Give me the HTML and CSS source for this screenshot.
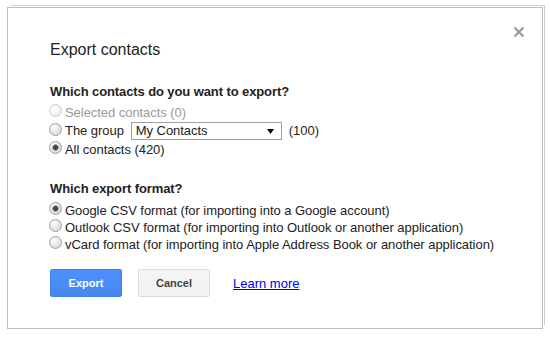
FILE: index.html
```html
<!DOCTYPE html>
<html lang="en">
<head>
<meta charset="utf-8">
<title>Export contacts</title>
<link rel="stylesheet" href="styles.css">
</head>
<body>
<div class="dialog">
  <span class="close" aria-label="Close">
    <svg width="12" height="12" viewBox="0 0 12 12"><path d="M1.5 1.5L10.5 10.5M10.5 1.5L1.5 10.5" stroke="#9a9a9a" stroke-width="2.2" fill="none"/></svg>
  </span>
  <h1 class="title">Export contacts</h1>

  <div class="heading">Which contacts do you want to export?</div>
  <div class="opts">
    <div class="opt disabled"><span class="radio off"></span>Selected contacts (0)</div>
    <div class="opt tall"><span class="radio"></span>The group
      <span class="select"><span>My Contacts</span><svg width="7" height="5" viewBox="0 0 7 5"><path d="M0 0H7L3.5 5Z" fill="#000"/></svg></span>
      (100)</div>
    <div class="opt"><span class="radio on"></span>All contacts (420)</div>
  </div>

  <div class="heading fmt">Which export format?</div>
  <div class="opts">
    <div class="opt"><span class="radio on"></span>Google CSV format (for importing into a Google account)</div>
    <div class="opt"><span class="radio"></span>Outlook CSV format (for importing into Outlook or another application)</div>
    <div class="opt"><span class="radio"></span>vCard format (for importing into Apple Address Book or another application)</div>
  </div>

  <div class="actions">
    <span class="btn primary">Export</span>
    <span class="btn secondary">Cancel</span>
    <a class="link" href="#">Learn more</a>
  </div>
</div>
</body>
</html>
```
FILE: styles.css
```css
body {
  margin: 0;
  background: #fff;
  font-family: Arial, "Liberation Sans", sans-serif;
  font-size: 13px;
  color: #222;
}

.dialog {
  position: relative;
  box-sizing: border-box;
  width: 536px;
  height: 322px;
  margin: 7px 0 0 7px;
  padding: 32px 42px 0;
  background: #fff;
  border: 1px solid #bdbdbd;
  box-shadow: 2px -2px 0 -1px #fff, 3px -3px 0 -1px #cfcfcf;
}

.close {
  position: absolute;
  top: 18px;
  right: 17px;
  width: 12px;
  height: 12px;
  display: block;
}
.close svg { display: block; }

.title {
  margin: 0 0 24px;
  font-size: 16px;
  font-weight: normal;
  line-height: 20px;
  color: #222;
}

.heading {
  font-weight: bold;
  line-height: 16px;
  margin-bottom: 4px;
  color: #222;
  letter-spacing: -0.1px;
}
.heading.fmt {
  margin-top: 23px;
  margin-bottom: 5px;
}

.opts {
  display: flex;
  flex-direction: column;
}

.opt {
  display: flex;
  align-items: center;
  height: 17px;
  white-space: nowrap;
  line-height: 16px;
  letter-spacing: -0.05px;
}
.opt.tall { height: 20px; }
.opt.disabled { color: #999; }

.radio {
  box-sizing: border-box;
  flex: none;
  width: 13px;
  height: 13px;
  margin: 0 3px 0 -1px;
  border-radius: 50%;
  border: 1px solid #a0a0a0;
  background: radial-gradient(circle at 35% 30%, #ffffff 0, #ededed 35%, #d0d0d0 100%);
  position: relative;
  top: -2px;
}
.radio.on {
  background:
    radial-gradient(circle, #3c3c3c 0, #4a4a4a 2px, rgba(80,80,80,0.5) 3px, transparent 3.6px),
    radial-gradient(circle at 35% 30%, #ffffff 0, #ededed 35%, #d0d0d0 100%);
}
.radio.off {
  border-color: #cdcdcd;
  background: radial-gradient(circle at 35% 30%, #ffffff 0, #f7f7f7 40%, #e6e6e6 100%);
}

.select {
  box-sizing: border-box;
  display: flex;
  align-items: center;
  justify-content: space-between;
  width: 151px;
  height: 18px;
  margin: 0 7px 0 7px;
  padding: 0 7px 0 4px;
  border: 1px solid #a0a0a0;
  background: #fff;
  color: #222;
}
.select svg { display: block; }

.actions {
  display: flex;
  align-items: center;
  margin-top: 16px;
}

.btn {
  box-sizing: border-box;
  display: flex;
  align-items: center;
  justify-content: center;
  width: 72px;
  height: 28px;
  border-radius: 2px;
  font-size: 11px;
  font-weight: bold;
}
.btn.primary {
  background: linear-gradient(#4d90fe, #4787ed);
  border: 1px solid #3b82f0;
  color: #fff;
}
.btn.secondary {
  margin-left: 16px;
  background: linear-gradient(#f5f5f5, #f1f1f1);
  border: 1px solid #dcdcdc;
  color: #444;
}

.link {
  margin-left: 23px;
  color: #0000ee;
  text-decoration: underline;
  font-size: 13px;
}
```
